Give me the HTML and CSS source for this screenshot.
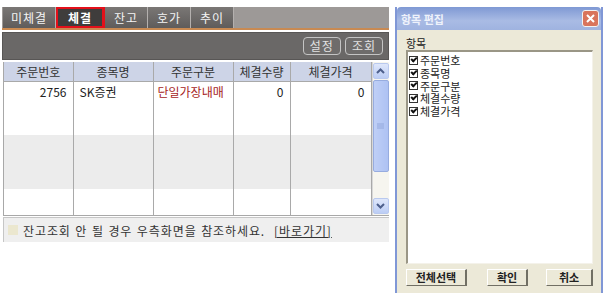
FILE: index.html
```html
<!DOCTYPE html>
<html>
<head>
<meta charset="utf-8">
<title>체결</title>
<link rel="stylesheet" href="styles.css">
</head>
<body>
<div class="page">
  <div class="main">
    <div class="tabs">
      <span class="tab first">미체결</span>
      <span class="tab on">체결</span>
      <span class="tab">잔고</span>
      <span class="tab">호가</span>
      <span class="tab">추이</span>
    </div>
    <div class="toolbar">
      <span class="tbtn">설정</span>
      <span class="tbtn">조회</span>
    </div>
    <div class="grid">
      <table class="list">
        <colgroup>
          <col style="width:69px"><col style="width:80px"><col style="width:80px"><col style="width:57px"><col style="width:81px">
        </colgroup>
        <tr class="head">
          <th>주문번호</th><th>종목명</th><th>주문구분</th><th>체결수량</th><th>체결가격</th>
        </tr>
        <tr class="r1">
          <td class="num">2756</td><td>SK증권</td><td class="red">단일가장내매</td><td class="num">0</td><td class="num">0</td>
        </tr>
        <tr class="r2">
          <td></td><td></td><td></td><td></td><td></td>
        </tr>
        <tr class="r3">
          <td></td><td></td><td></td><td></td><td></td>
        </tr>
      </table>
      <div class="scroll">
        <div class="sbtn">
          <svg width="9" height="6" viewBox="0 0 9 6"><path d="M1 5 L4.5 1.5 L8 5" fill="none" stroke="#4d5f8c" stroke-width="2"/></svg>
        </div>
        <div class="thumb">
          <svg width="7" height="6" viewBox="0 0 7 6"><path d="M0 1h7M0 3h7M0 5h7" stroke="#93a8dc" stroke-width="1"/></svg>
        </div>
        <div class="track"></div>
        <div class="sbtn">
          <svg width="9" height="6" viewBox="0 0 9 6"><path d="M1 1 L4.5 4.5 L8 1" fill="none" stroke="#4d5f8c" stroke-width="2"/></svg>
        </div>
      </div>
    </div>
    <div class="notice">
      <span class="mark"></span>
      <span>잔고조회 안 될 경우 우측화면을 참조하세요.</span>
      <a class="go">[바로가기]</a>
    </div>
  </div>

  <div class="dialog">
    <div class="titlebar">
      <span class="title">항목 편집</span>
      <span class="close">
        <svg width="11" height="11" viewBox="0 0 11 11"><path d="M2 2 L9 9 M9 2 L2 9" stroke="#fff" stroke-width="2"/></svg>
      </span>
    </div>
    <div class="dbody">
      <div class="label">항목</div>
      <div class="items">
        <div class="item"><span class="chk"></span>주문번호</div>
        <div class="item"><span class="chk"></span>종목명</div>
        <div class="item"><span class="chk"></span>주문구분</div>
        <div class="item"><span class="chk"></span>체결수량</div>
        <div class="item"><span class="chk"></span>체결가격</div>
      </div>
      <div class="buttons">
        <span class="btn wide">전체선택</span>
        <span class="gap"></span>
        <span class="btn">확인</span>
        <span class="btn last">취소</span>
      </div>
    </div>
  </div>
</div>
</body>
</html>
```

FILE: styles.css
```css
body {
   margin: 0;
   background-color: white;
   font-family: "Noto Sans CJK KR", "DejaVu Sans", sans-serif;
   font-size: 12px;
   color: #222;
}

.page {
   display: flex;
   align-items: flex-start;
   padding-top: 7px;
}

/* left panel */

.main {
   width: 387px;
   margin-left: 2px;
}

.tabs {
   display: flex;
   height: 21px;
   background-color: #9d9997;
   border-bottom: 2px solid #c98a52;
   padding-left: 1px;
}

.tab {
   width: 42px;
   height: 21px;
   line-height: 21px;
   text-align: center;
   color: #f4f4f4;
   background: linear-gradient(#7a7775, #5f5c5b);
   border-right: 1px solid #b4b0ae;
   font-size: 12px;
   letter-spacing: 1px;
}

.tab.first {
   width: 52px;
}

.tab.on {
   width: 48px;
   background: #3f3d3c;
   color: white;
   font-weight: bold;
   box-shadow: inset 0 0 0 2px #e3101a;
   border-right: 1px solid #e3101a;
}

.toolbar {
   margin-top: 2px;
   height: 28px;
   background-color: #6a6867;
   border: 1px solid #585655;
   box-sizing: border-box;
   display: flex;
   justify-content: flex-end;
   align-items: center;
   gap: 4px;
   padding-right: 5px;
}

.tbtn {
   height: 16px;
   line-height: 16px;
   padding: 0 6px;
   color: #e2e2e2;
   border: 1px solid #c4c4c4;
   border-radius: 4px;
   background-color: #6e6c6b;
   font-size: 12px;
   letter-spacing: 1px;
}

.grid {
   margin-top: 2px;
   margin-left: 1px;
   display: flex;
   height: 153px;
   border-left: 1px solid #a8a8a8;
   border-bottom: 1px solid #a8a8a8;
   overflow: hidden;
}

.list {
   border-collapse: collapse;
   table-layout: fixed;
   width: 367px;
}

.list th, .list td {
   border-right: 1px solid #a9a9a9;
   padding: 0 6px;
   vertical-align: top;
   white-space: nowrap;
   overflow: hidden;
}

.list th {
   height: 19px;
   line-height: 19px;
   background-color: #cdd4e7;
   font-weight: normal;
   color: #333;
   border-bottom: 1px solid #a9a9a9;
   vertical-align: middle;
}

.list td {
   line-height: 20px;
}

.list .r1 td {
   height: 53px;
   background-color: white;
}

.list .r2 td {
   height: 54px;
   background-color: #ececec;
}

.list .r3 td {
   height: 26px;
   background-color: white;
}

.list td.num {
   text-align: right;
}

.list td.red {
   color: #a61d1d;
   padding: 0 4px;
}

.scroll {
   width: 17px;
   display: flex;
   flex-direction: column;
   background-color: #f6f5ef;
   border-left: 1px solid #d8d8d8;
}

.sbtn {
   height: 16px;
   margin: 1px 0;
   border: 1px solid #b9c9ef;
   border-radius: 2px;
   background: linear-gradient(#dfe7fb, #bccdf5);
   display: flex;
   align-items: center;
   justify-content: center;
   box-sizing: border-box;
}

.thumb {
   height: 90px;
   border: 1px solid #97acdf;
   border-radius: 2px;
   background: linear-gradient(90deg, #bfcff6, #aec2f3);
   display: flex;
   align-items: center;
   justify-content: center;
}

.track {
   flex: 1;
}

.notice {
   margin-top: 1px;
   margin-left: 1px;
   height: 24px;
   background-color: #efefef;
   border-top: 1px solid #c6c6c6;
   border-left: 1px solid #c6c6c6;
   display: flex;
   align-items: center;
   gap: 5px;
   padding-left: 4px;
   color: #333;
   font-size: 12px;
   letter-spacing: 0.9px;
   word-spacing: 1px;
}

.mark {
   width: 10px;
   height: 10px;
   background-color: #ebe7cf;
}

.go {
   margin-left: 4px;
   text-decoration: underline;
}

/* dialog */

.dialog {
   margin-left: 6px;
   width: 208px;
   height: 286px;
   display: flex;
   flex-direction: column;
   border-left: 2px solid #8097d6;
   border-right: 2px solid #8097d6;
   box-sizing: border-box;
}

.titlebar {
   height: 23px;
   background: linear-gradient(#7f99d4, #a9bbe4 60%, #9fb3e0);
   display: flex;
   align-items: center;
   justify-content: space-between;
   padding: 0 2px 0 4px;
   border-radius: 4px 4px 0 0;
}

.title {
   color: #eef2fb;
   font-weight: bold;
   font-size: 11px;
}

.close {
   width: 17px;
   height: 17px;
   box-sizing: border-box;
   background-color: #d9745c;
   border: 1px solid #f2f2f2;
   border-radius: 3px;
   display: flex;
   align-items: center;
   justify-content: center;
}

.dbody {
   flex: 1;
   background-color: #ece9d8;
   padding: 6px 8px 6px 9px;
   display: flex;
   flex-direction: column;
   font-size: 11px;
}

.label {
   line-height: 14px;
   color: #222;
}

.items {
   height: 214px;
   background-color: white;
   border-top: 2px solid #9a9686;
   border-left: 2px solid #9a9686;
   border-right: 1px solid #f4f2ea;
   border-bottom: 1px solid #f4f2ea;
   padding: 2px 0 0 1px;
   box-sizing: border-box;
}

.item {
   display: flex;
   align-items: center;
   height: 12.8px;
   line-height: 12.8px;
   color: #222;
}

.chk {
   width: 7px;
   height: 7px;
   border: 1px solid #333;
   margin-right: 2px;
   position: relative;
}

.chk::after {
   content: "";
   position: absolute;
   left: 1px;
   top: 0px;
   width: 4px;
   height: 2px;
   border-left: 2px solid #111;
   border-bottom: 2px solid #111;
   transform: rotate(-45deg);
}

.buttons {
   display: flex;
   margin-top: 5px;
   gap: 18px;
}

.btn {
   height: 15px;
   line-height: 15px;
   width: 38px;
   text-align: center;
   border-right: 2px solid #716f64;
   border-bottom: 1px solid #716f64;
   border-left: 1px solid white;
   border-top: 1px solid white;
   color: #222;
   font-weight: bold;
}

.btn.wide {
   width: 58px;
}

.btn.last {
   width: 44px;
}

.gap {
   flex: 1;
   margin: 0 -18px;
}
```
